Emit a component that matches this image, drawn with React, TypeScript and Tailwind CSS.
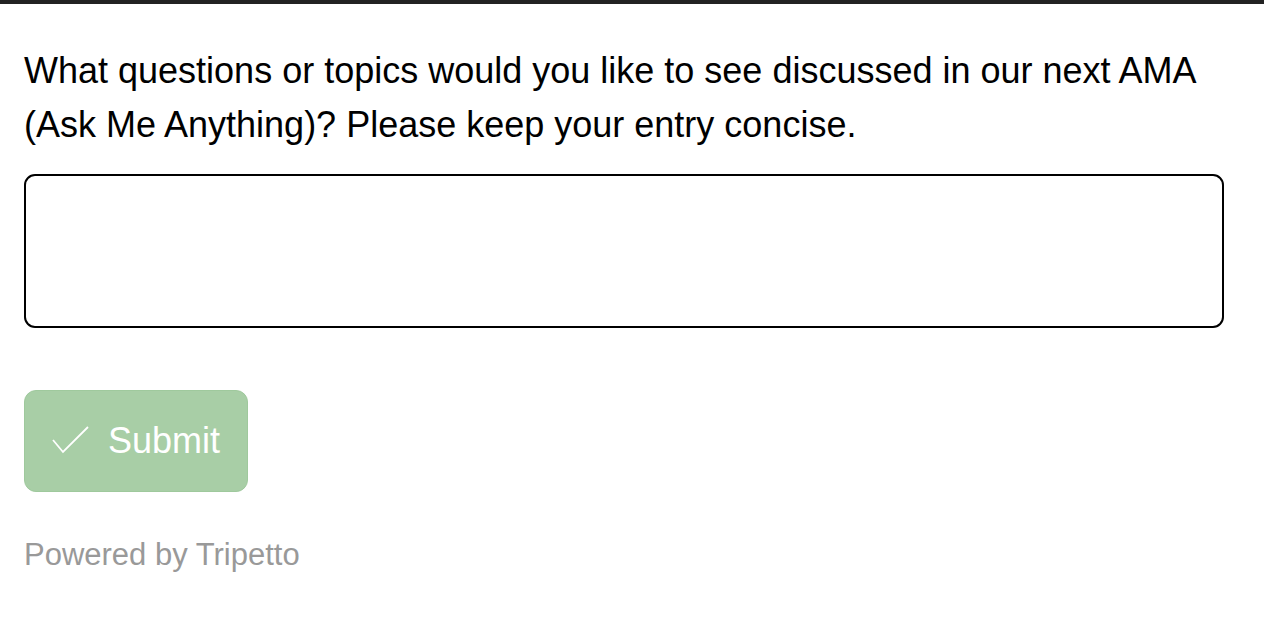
import React, { useState } from "react";

const App: React.FC = () => {
  const [value, setValue] = useState("");

  return (
    <div className="min-h-screen bg-white font-['Liberation_Sans',Arial,sans-serif]">
      {/* Top bar */}
      <div className="h-[4px] bg-[#222222]" />

      <div className="px-[24px] pt-[40px] pr-[40px]">
        <p className="w-[1200px] text-[36px] leading-[54px] text-black">
          What questions or topics would you like to see discussed in our next AMA (Ask Me Anything)? Please keep your entry concise.
        </p>

        <textarea
          value={value}
          onChange={(e) => setValue(e.target.value)}
          className="mt-[22px] block w-[1200px] h-[154px] resize-none rounded-[11px] border-2 border-black bg-white px-4 py-3 text-[32px] outline-none"
        />

        <button className="mt-[62px] flex h-[102px] w-[224px] items-center gap-[16px] rounded-[12px] border border-[#9fc99d] bg-[#a8cea6] pl-[27px] text-[36px] text-white">
          <svg width="40" height="30" viewBox="0 0 40 30" fill="none" stroke="white" strokeWidth="1.8">
            <path d="M1 14 L11 26 L36 1" />
          </svg>
          Submit
        </button>

        <div className="mt-[40px] text-[31px] text-[#999999]">Powered by Tripetto</div>
      </div>
    </div>
  );
};

export default App;
